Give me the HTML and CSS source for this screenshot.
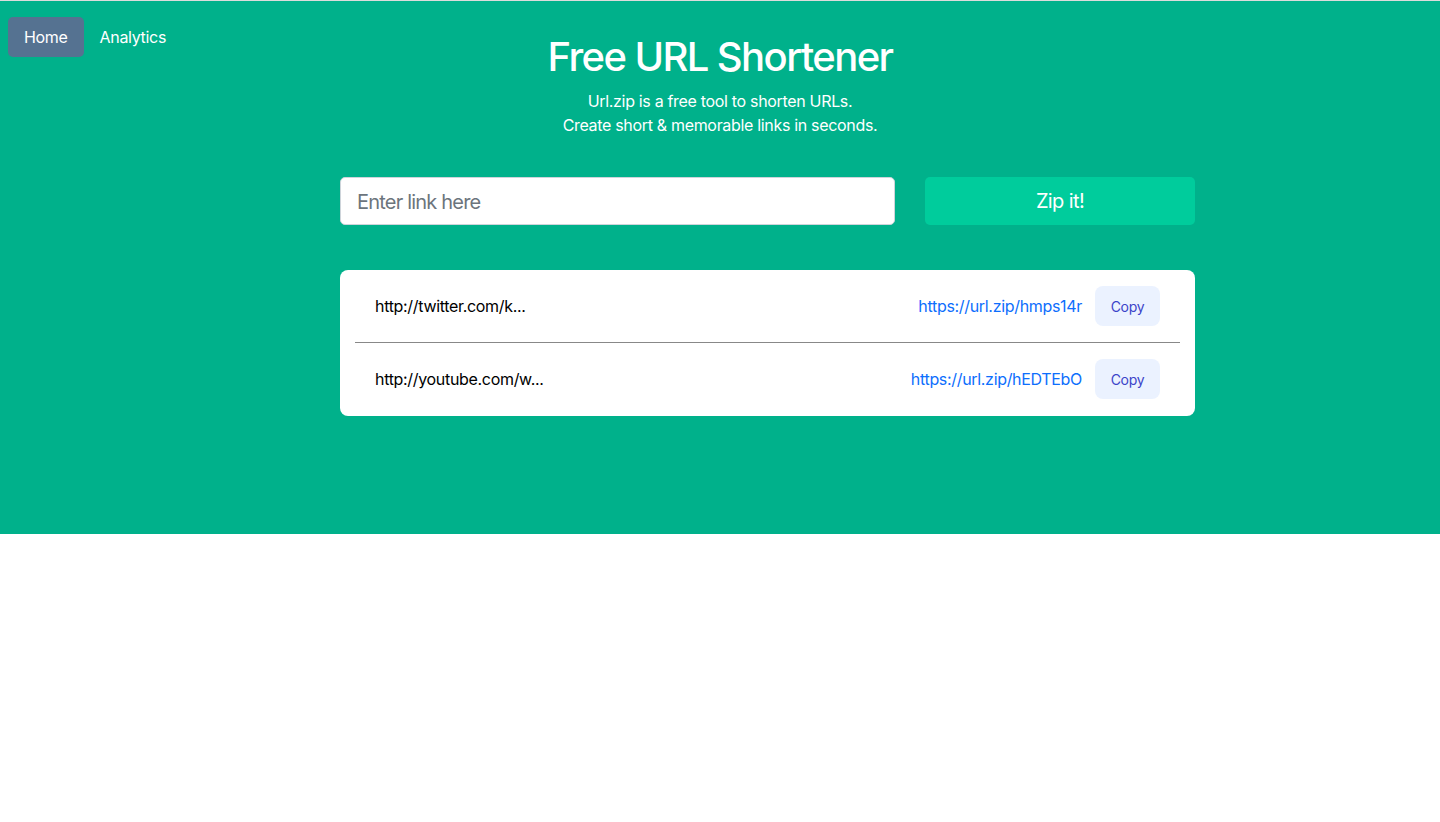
FILE: index.html
```html
<!DOCTYPE html>
<html lang="en">
<head>
<meta charset="utf-8">
<title>Url.zip - Free URL Shortener</title>
<link rel="stylesheet" href="styles.css">
</head>
<body>
<header class="hero">
  <div class="top">
    <nav class="nav">
      <a class="nav-link active" href="#">Home</a>
      <a class="nav-link" href="#">Analytics</a>
    </nav>
    <div class="intro">
      <h1 class="title">Free URL Shortener</h1>
      <p class="lead">Url.zip is a free tool to shorten URLs.<br>Create short &amp; memorable links in seconds.</p>
    </div>
    <div></div>
  </div>
  <main class="content">
    <form class="shorten">
      <input class="link-input" type="text" placeholder="Enter link here">
      <button class="zip-btn" type="button">Zip it!</button>
    </form>
    <section class="results">
      <div class="result">
        <span class="original">http://twitter.com/k...</span>
        <a class="short" href="#">https://url.zip/hmps14r</a>
        <button class="copy-btn" type="button">Copy</button>
      </div>
      <hr class="sep">
      <div class="result">
        <span class="original">http://youtube.com/w...</span>
        <a class="short" href="#">https://url.zip/hEDTEbO</a>
        <button class="copy-btn" type="button">Copy</button>
      </div>
    </section>
  </main>
</header>
</body>
</html>
```
FILE: styles.css
```css
* { box-sizing: border-box; }
body {
  margin: 0;
  font-family: Inter, "Liberation Sans", sans-serif;
  font-size: 16px;
  line-height: 24px;
  letter-spacing: -0.02em;
  color: #000;
  background: #fff;
}
.hero {
  background: #00b18b;
  border-top: 1px solid #dcdcdc;
  min-height: 534px;
  padding-top: 16px;
}
.top {
  display: grid;
  grid-template-columns: 1fr auto 1fr;
  align-items: start;
}
.nav {
  display: flex;
  padding-left: 8px;
}
.nav-link {
  display: block;
  color: #fff;
  text-decoration: none;
  padding: 8px 16px;
  border-radius: 5px;
  line-height: 24px;
}
.nav-link.active { background: #557291; }
.intro {
  text-align: center;
  color: #fff;
  padding-top: 16px;
}
.title {
  margin: 0 0 8px;
  font-size: 40px;
  line-height: 48px;
  font-weight: 500;
  letter-spacing: -0.04em;
}
.lead {
  margin: 0;
  font-size: 16px;
  line-height: 24px;
}
.content {
  margin-left: 340px;
  width: 855px;
  padding-top: 40px;
}
.shorten {
  display: flex;
  gap: 30px;
  margin: 0;
}
.link-input {
  flex: 1;
  height: 48px;
  border: 1px solid #ced4da;
  border-radius: 5px;
  padding: 2px 16px 0;
  font-family: inherit;
  font-size: 20px;
  letter-spacing: -0.04em;
  color: #212529;
  background: #fff;
}
.link-input::placeholder { color: #6c757d; }
.zip-btn {
  width: 270px;
  height: 48px;
  border: 0;
  border-radius: 5px;
  background: #00cc9c;
  color: #fff;
  font-family: inherit;
  font-size: 20px;
  letter-spacing: -0.03em;
}
.results {
  margin-top: 45px;
  background: #fff;
  border-radius: 8px;
  padding: 0 15px 1px;
}
.result {
  display: flex;
  align-items: center;
  padding: 16px 20px;
}
.original { flex: 1; }
.short {
  color: #0d6efd;
  text-decoration: none;
  margin-right: 13px;
}
.copy-btn {
  height: 40px;
  width: 65px;
  border: 0;
  border-radius: 8px;
  background: #ebf2ff;
  color: #3b44c9;
  font-family: inherit;
  font-size: 14px;
  letter-spacing: -0.02em;
}
.sep {
  margin: 0;
  border: 0;
  border-top: 1px solid #888;
}
```
